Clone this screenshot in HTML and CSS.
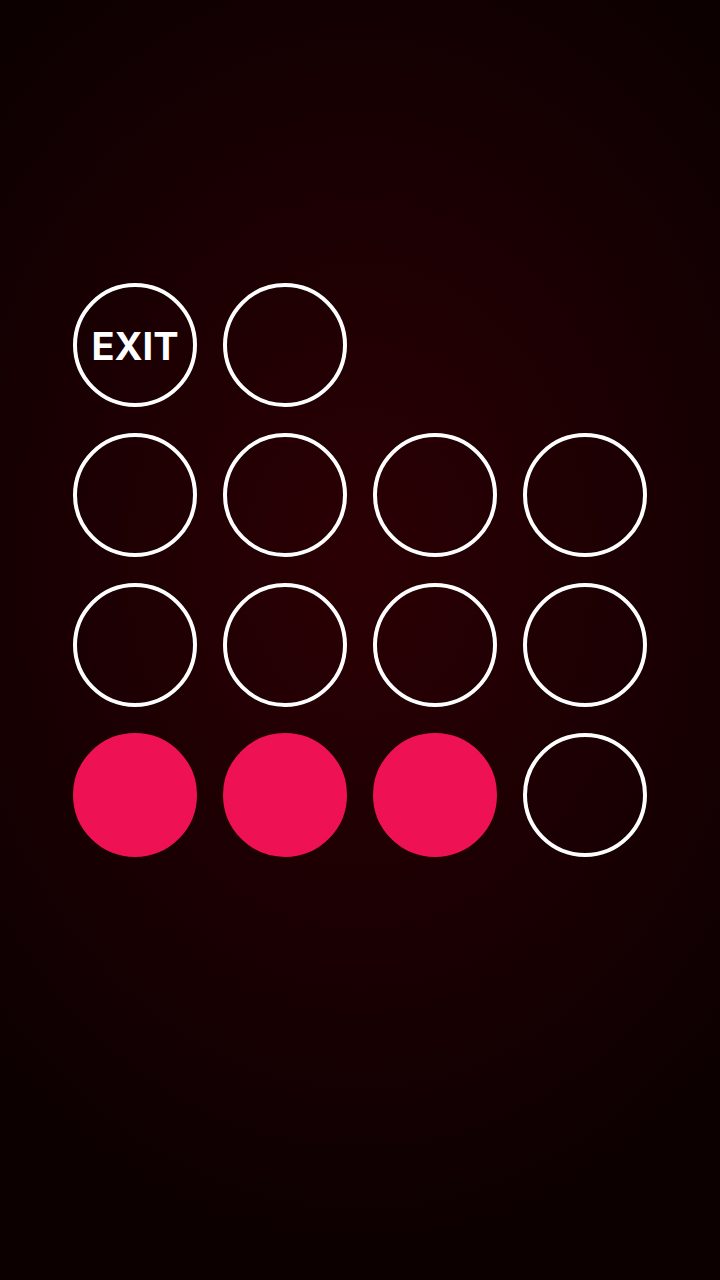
FILE: index.html
```html
<!DOCTYPE html>
<html lang="en">
<head>
  <meta charset="UTF-8" />
  <meta name="viewport" content="width=device-width, initial-scale=1.0" />
  <title>Pads</title>
  <link rel="stylesheet" href="styles.css">
</head>
<body>
  <main class="pads">
    <button class="pad pad-exit" type="button">EXIT</button>
    <button class="pad" type="button"></button>
    <span class="pad-empty"></span>
    <span class="pad-empty"></span>

    <button class="pad" type="button"></button>
    <button class="pad" type="button"></button>
    <button class="pad" type="button"></button>
    <button class="pad" type="button"></button>

    <button class="pad" type="button"></button>
    <button class="pad" type="button"></button>
    <button class="pad" type="button"></button>
    <button class="pad" type="button"></button>

    <button class="pad on" type="button"></button>
    <button class="pad on" type="button"></button>
    <button class="pad on" type="button"></button>
    <button class="pad" type="button"></button>
  </main>
</body>
</html>
```

FILE: styles.css
```css
:root {
  --rosa: #ee1154;
  --blanco: #fff;
}

html, body {
  height: 100%;
}

body {
  margin: 0;
  min-height: 1280px;
  background: radial-gradient(ellipse 75% 55% at 50% 44%, #2b0004 0%, #1c0003 50%, #0c0001 100%);
  font-family: Inter, "Liberation Sans", sans-serif;
}

.pads {
  display: grid;
  grid-template-columns: repeat(4, 124px);
  grid-auto-rows: 124px;
  gap: 26px;
  justify-content: center;
  padding-top: 283px;
}

.pad {
  box-sizing: border-box;
  width: 124px;
  height: 124px;
  padding: 0;
  border: 4.5px solid var(--blanco);
  border-radius: 50%;
  background: transparent;
  color: var(--blanco);
  cursor: pointer;
}

.pad-exit {
  font-family: inherit;
  font-size: 38px;
  font-weight: 700;
  letter-spacing: 0;
  padding-top: 2px;
}

.pad.on {
  border-color: var(--rosa);
  background: var(--rosa);
}
```
